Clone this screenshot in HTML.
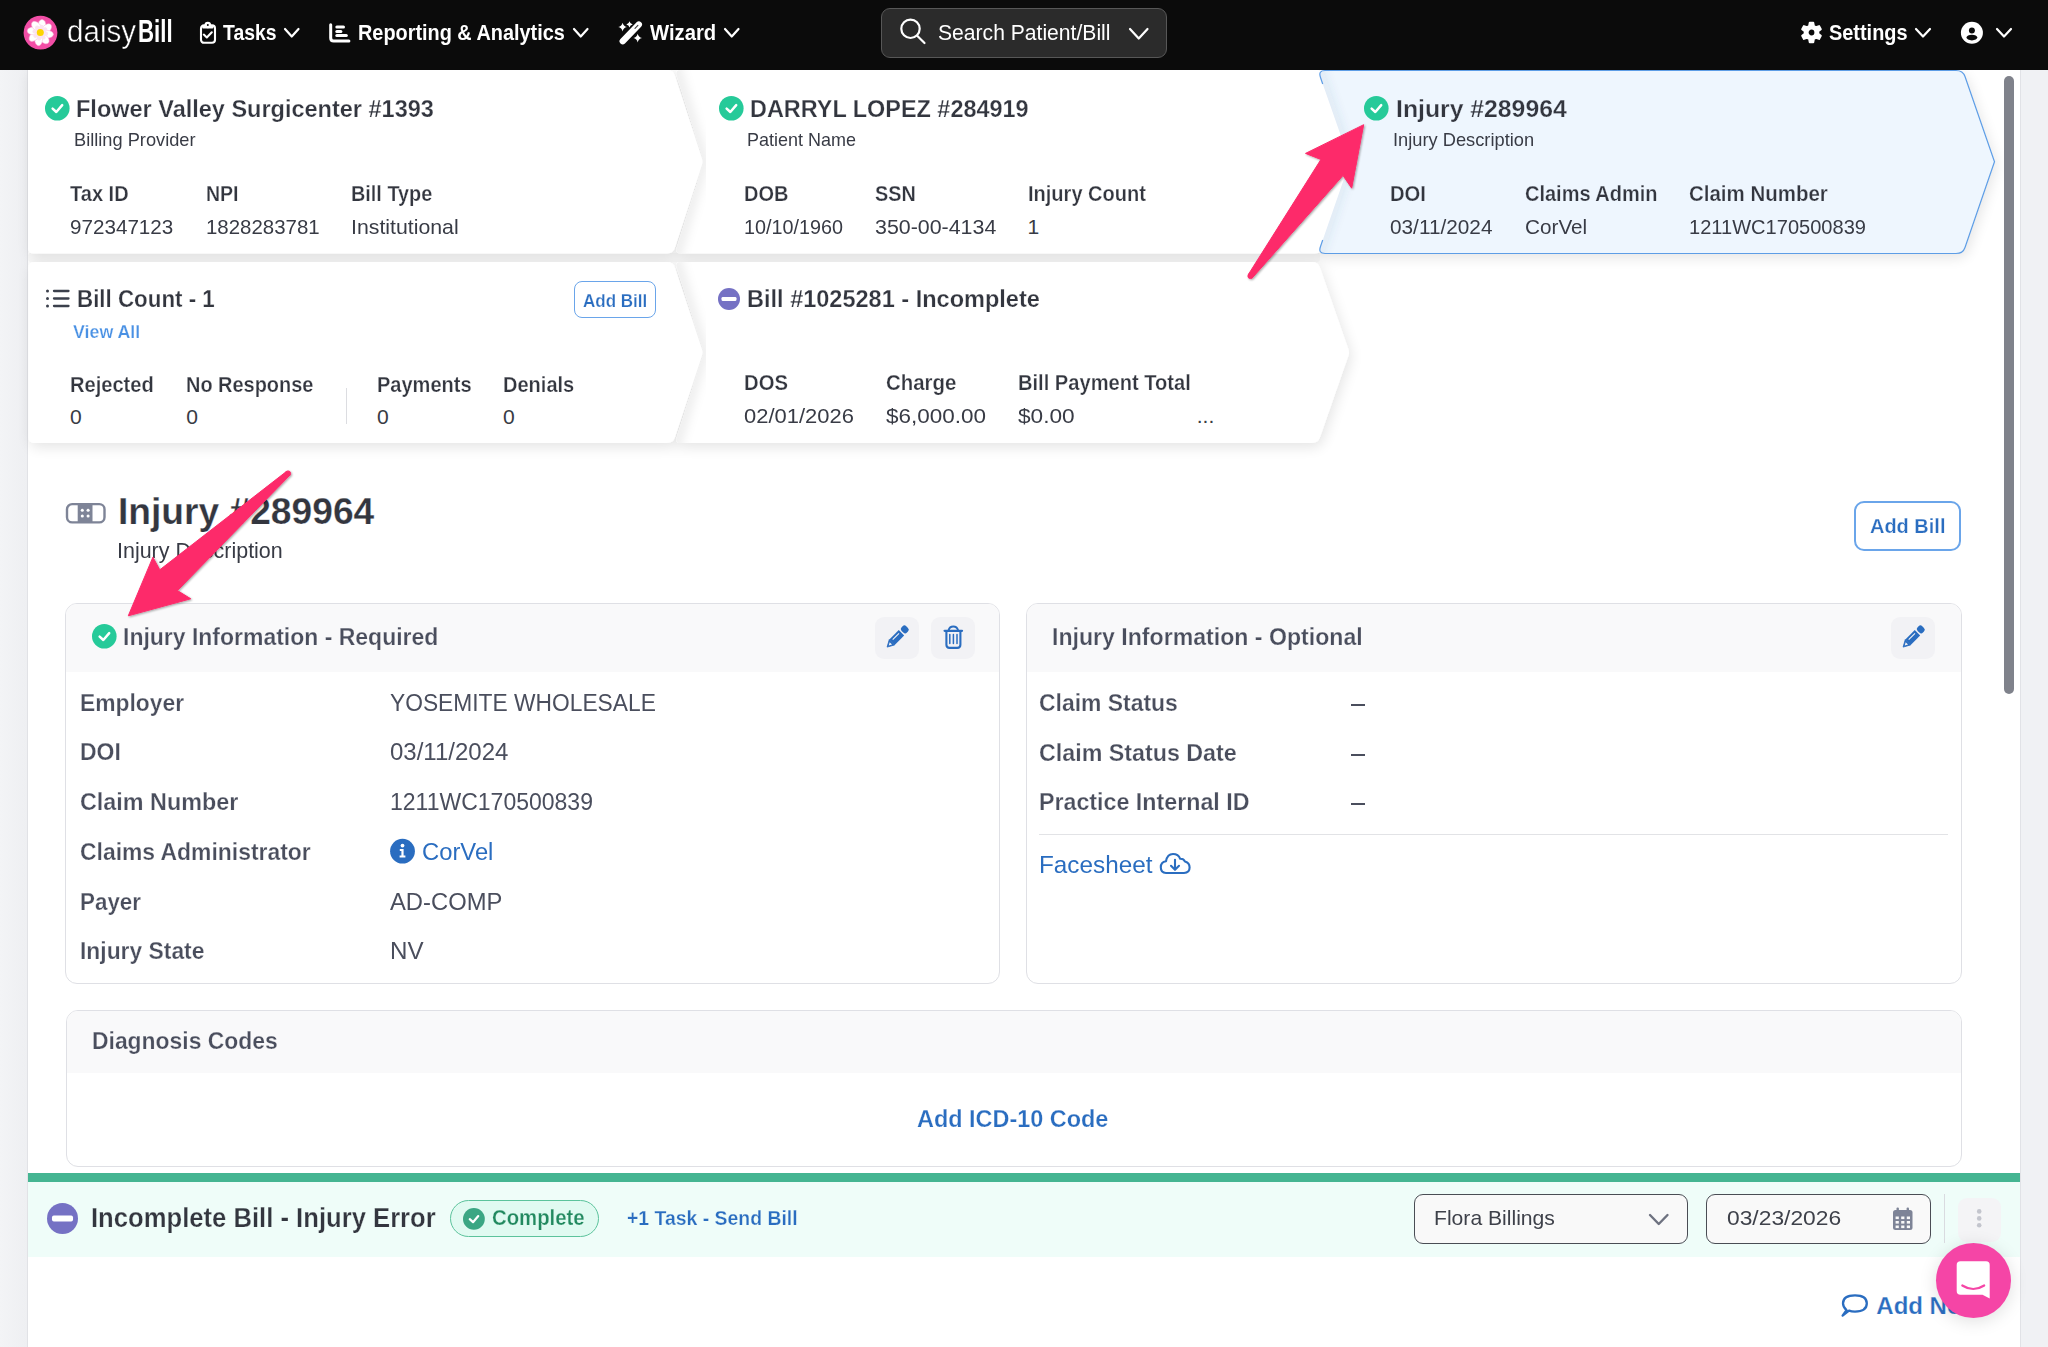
<!DOCTYPE html><html><head><meta charset="utf-8"><style>
html,body{margin:0;padding:0;width:2048px;height:1347px;overflow:hidden;background:#fff;font-family:"Liberation Sans",sans-serif;}
.t{position:absolute;white-space:nowrap;}
.a{position:absolute;}
svg{position:absolute;overflow:visible;}
</style></head><body>
<div class="a" style="left:0;top:0;width:27px;height:1347px;background:linear-gradient(90deg,#f3f4f6,#eeeff2);border-right:1px solid #e1e2e6"></div>
<div class="a" style="left:2020px;top:0;width:28px;height:1347px;background:#f0f1f4;border-left:1px solid #e1e2e6"></div>
<svg style="left:0;top:0" width="2048" height="500">
<defs>
<filter id="sh" x="-5%" y="-20%" width="110%" height="140%"><feGaussianBlur in="SourceAlpha" stdDeviation="7"/><feOffset dx="2" dy="4"/><feComponentTransfer><feFuncA type="linear" slope="0.11"/></feComponentTransfer><feMerge><feMergeNode/><feMergeNode in="SourceGraphic"/></feMerge></filter>
<filter id="bl"><feGaussianBlur stdDeviation="5"/></filter>
<clipPath id="cB"><path d="M676.81 75.72 Q675 70 681.00 70.00 L1315.00 70.00 Q1321 70 1322.86 75.70 L1350.07 158.90 Q1351 161.75 1350.07 164.60 L1322.86 247.80 Q1321 253.5 1315.00 253.50 L681.00 253.50 Q675 253.5 676.81 247.78 L703.10 164.61 Q704 161.75 703.10 158.89 Z"/></clipPath>
<clipPath id="cC"><path d="M1320.32 77.11 Q1318 70.5 1325.00 70.50 L1955.00 70.50 Q1963 70.5 1965.61 78.06 L1993.85 159.86 Q1994.5 161.75 1993.85 163.64 L1965.60 245.93 Q1963 253.5 1955.00 253.50 L1325.00 253.50 Q1318 253.5 1320.31 246.89 L1349.01 164.58 Q1350 161.75 1349.01 158.92 Z"/></clipPath>
<clipPath id="cE"><path d="M676.83 267.71 Q675 262 681.00 262.00 L1312.00 262.00 Q1318 262 1319.97 267.67 L1348.51 349.67 Q1349.5 352.5 1348.51 355.33 L1319.97 437.33 Q1318 443 1312.00 443.00 L681.00 443.00 Q675 443 676.83 437.29 L703.08 355.36 Q704 352.5 703.08 349.64 Z"/></clipPath>
</defs>
<rect x="28" y="253" width="1292" height="9" rx="3" fill="#f9f9f9"/>
<g filter="url(#sh)">
<path d="M28.00 70.00 Q28 70 28.00 70.00 L667.00 70.00 Q673 70 674.86 75.70 L702.07 158.90 Q703 161.75 702.07 164.60 L674.86 247.80 Q673 253.5 667.00 253.50 L34.00 253.50 Q28 253.5 28.00 247.50 Z" fill="#fff"/>
<path d="M676.81 75.72 Q675 70 681.00 70.00 L1315.00 70.00 Q1321 70 1322.86 75.70 L1350.07 158.90 Q1351 161.75 1350.07 164.60 L1322.86 247.80 Q1321 253.5 1315.00 253.50 L681.00 253.50 Q675 253.5 676.81 247.78 L703.10 164.61 Q704 161.75 703.10 158.89 Z" fill="#fff"/>
<path d="M28.50 268.00 Q28.5 262 34.50 262.00 L667.00 262.00 Q673 262 674.89 267.70 L702.06 349.65 Q703 352.5 702.06 355.35 L674.89 437.30 Q673 443 667.00 443.00 L34.50 443.00 Q28.5 443 28.50 437.00 Z" fill="#fff"/>
<path d="M676.83 267.71 Q675 262 681.00 262.00 L1312.00 262.00 Q1318 262 1319.97 267.67 L1348.51 349.67 Q1349.5 352.5 1348.51 355.33 L1319.97 437.33 Q1318 443 1312.00 443.00 L681.00 443.00 Q675 443 676.83 437.29 L703.08 355.36 Q704 352.5 703.08 349.64 Z" fill="#fff"/>
<path d="M1320.32 77.11 Q1318 70.5 1325.00 70.50 L1955.00 70.50 Q1963 70.5 1965.61 78.06 L1993.85 159.86 Q1994.5 161.75 1993.85 163.64 L1965.60 245.93 Q1963 253.5 1955.00 253.50 L1325.00 253.50 Q1318 253.5 1320.31 246.89 L1349.01 164.58 Q1350 161.75 1349.01 158.92 Z" fill="#eef6fe"/>
</g>
<g clip-path="url(#cB)"><path d="M673 60 L703 161.75 L673 263.5" stroke="#000" stroke-opacity="0.065" stroke-width="12" fill="none" filter="url(#bl)"/></g>
<g clip-path="url(#cE)"><path d="M673 252 L703 352.5 L673 453" stroke="#000" stroke-opacity="0.065" stroke-width="12" fill="none" filter="url(#bl)"/></g>
<g clip-path="url(#cC)"><path d="M1316 60 L1350 161.75 L1316 263.5" stroke="#3a5a80" stroke-opacity="0.10" stroke-width="8" fill="none" filter="url(#bl)"/></g>
<path d="M1322.7 84 L1320.5 77.5 Q1318 70.5 1325 70.5 L1956 70.5 Q1963 70.5 1965 76.5 L1994.5 161.75 L1965 247.5 Q1963 253.5 1956 253.5 L1325 253.5 Q1318 253.5 1320.5 246.5 L1322.7 240.0" fill="none" stroke="#5d9de6" stroke-width="1.2"/>
</svg>
<svg style="left:44.0px;top:95.10000000000001px" width="26.6" height="26.6"><circle cx="13.3" cy="13.3" r="12.3" fill="#26ca99"/><path d="M8.63 13.55 L12.32 16.99 L18.22 10.10" stroke="#fff" stroke-width="2.46" fill="none" stroke-linecap="round" stroke-linejoin="round"/></svg>
<div class="t" style="left:76.00px;top:97px;font-size:24.4px;line-height:24.4px;font-weight:700;color:#33363f;transform:scaleX(0.9634);transform-origin:0 0;-webkit-text-stroke:0.25px #fff;">Flower Valley Surgicenter #1393</div>
<div class="t" style="left:73.70px;top:131px;font-size:18.4px;line-height:18.4px;font-weight:400;color:#383b45;transform:scaleX(0.9908);transform-origin:0 0;">Billing Provider</div>
<div class="t" style="left:70.40px;top:184px;font-size:21.4px;line-height:21.4px;font-weight:700;color:#33363f;transform:scaleX(0.9362);transform-origin:0 0;-webkit-text-stroke:0.25px #fff;">Tax ID</div>
<div class="t" style="left:205.70px;top:184px;font-size:21.4px;line-height:21.4px;font-weight:700;color:#33363f;transform:scaleX(0.9121);transform-origin:0 0;-webkit-text-stroke:0.25px #fff;">NPI</div>
<div class="t" style="left:350.70px;top:184px;font-size:21.4px;line-height:21.4px;font-weight:700;color:#33363f;transform:scaleX(0.9277);transform-origin:0 0;-webkit-text-stroke:0.25px #fff;">Bill Type</div>
<div class="t" style="left:70.40px;top:216px;font-size:21.1px;line-height:21.1px;font-weight:400;color:#383b45;transform:scaleX(0.9782);transform-origin:0 0;">972347123</div>
<div class="t" style="left:205.70px;top:216px;font-size:21.1px;line-height:21.1px;font-weight:400;color:#383b45;transform:scaleX(0.9683);transform-origin:0 0;">1828283781</div>
<div class="t" style="left:350.70px;top:216px;font-size:21.1px;line-height:21.1px;font-weight:400;color:#383b45;transform:scaleX(1.0087);transform-origin:0 0;">Institutional</div>
<svg style="left:717.5px;top:95.10000000000001px" width="26.6" height="26.6"><circle cx="13.3" cy="13.3" r="12.3" fill="#26ca99"/><path d="M8.63 13.55 L12.32 16.99 L18.22 10.10" stroke="#fff" stroke-width="2.46" fill="none" stroke-linecap="round" stroke-linejoin="round"/></svg>
<div class="t" style="left:750.00px;top:97px;font-size:24.4px;line-height:24.4px;font-weight:700;color:#33363f;transform:scaleX(0.9602);transform-origin:0 0;-webkit-text-stroke:0.25px #fff;">DARRYL LOPEZ #284919</div>
<div class="t" style="left:747.00px;top:131px;font-size:18.4px;line-height:18.4px;font-weight:400;color:#383b45;transform:scaleX(0.9775);transform-origin:0 0;">Patient Name</div>
<div class="t" style="left:744.00px;top:184px;font-size:21.4px;line-height:21.4px;font-weight:700;color:#33363f;transform:scaleX(0.9346);transform-origin:0 0;-webkit-text-stroke:0.25px #fff;">DOB</div>
<div class="t" style="left:874.90px;top:184px;font-size:21.4px;line-height:21.4px;font-weight:700;color:#33363f;transform:scaleX(0.9255);transform-origin:0 0;-webkit-text-stroke:0.25px #fff;">SSN</div>
<div class="t" style="left:1027.60px;top:184px;font-size:21.4px;line-height:21.4px;font-weight:700;color:#33363f;transform:scaleX(0.9362);transform-origin:0 0;-webkit-text-stroke:0.25px #fff;">Injury Count</div>
<div class="t" style="left:744.00px;top:216px;font-size:21.1px;line-height:21.1px;font-weight:400;color:#383b45;transform:scaleX(0.9375);transform-origin:0 0;">10/10/1960</div>
<div class="t" style="left:874.90px;top:216px;font-size:21.1px;line-height:21.1px;font-weight:400;color:#383b45;transform:scaleX(1.0139);transform-origin:0 0;">350-00-4134</div>
<div class="t" style="left:1027.60px;top:216px;font-size:21.1px;line-height:21.1px;font-weight:400;color:#383b45;">1</div>
<svg style="left:1363.4px;top:95.10000000000001px" width="26.6" height="26.6"><circle cx="13.3" cy="13.3" r="12.3" fill="#26ca99"/><path d="M8.63 13.55 L12.32 16.99 L18.22 10.10" stroke="#fff" stroke-width="2.46" fill="none" stroke-linecap="round" stroke-linejoin="round"/></svg>
<div class="t" style="left:1395.80px;top:97px;font-size:24.4px;line-height:24.4px;font-weight:700;color:#33363f;transform:scaleX(1.0152);transform-origin:0 0;-webkit-text-stroke:0.25px #eef6fe;">Injury #289964</div>
<div class="t" style="left:1392.70px;top:131px;font-size:18.4px;line-height:18.4px;font-weight:400;color:#383b45;transform:scaleX(0.9934);transform-origin:0 0;">Injury Description</div>
<div class="t" style="left:1390.00px;top:184px;font-size:21.4px;line-height:21.4px;font-weight:700;color:#33363f;transform:scaleX(0.9451);transform-origin:0 0;-webkit-text-stroke:0.25px #eef6fe;">DOI</div>
<div class="t" style="left:1524.80px;top:184px;font-size:21.4px;line-height:21.4px;font-weight:700;color:#33363f;transform:scaleX(0.9346);transform-origin:0 0;-webkit-text-stroke:0.25px #eef6fe;">Claims Admin</div>
<div class="t" style="left:1689.00px;top:184px;font-size:21.4px;line-height:21.4px;font-weight:700;color:#33363f;transform:scaleX(0.9566);transform-origin:0 0;-webkit-text-stroke:0.25px #eef6fe;">Claim Number</div>
<div class="t" style="left:1390.00px;top:216px;font-size:21.1px;line-height:21.1px;font-weight:400;color:#383b45;transform:scaleX(0.9854);transform-origin:0 0;">03/11/2024</div>
<div class="t" style="left:1524.80px;top:216px;font-size:21.1px;line-height:21.1px;font-weight:400;color:#383b45;transform:scaleX(0.9826);transform-origin:0 0;">CorVel</div>
<div class="t" style="left:1689.00px;top:216px;font-size:21.1px;line-height:21.1px;font-weight:400;color:#383b45;transform:scaleX(0.9511);transform-origin:0 0;">1211WC170500839</div>
<svg style="left:44px;top:287px" width="30" height="24" fill="none" stroke="#3b404c" stroke-width="2.3" stroke-linecap="round">
<path d="M10 4 H24.5"/><path d="M10 11.5 H24.5"/><path d="M10 19 H24.5"/>
</svg>
<svg style="left:44px;top:287px" width="30" height="24" fill="#3b404c"><circle cx="3.5" cy="4" r="1.5"/><circle cx="3.5" cy="11.5" r="1.5"/><circle cx="3.5" cy="19" r="1.5"/></svg>
<div class="t" style="left:76.50px;top:287px;font-size:24.7px;line-height:24.7px;font-weight:700;color:#33363f;transform:scaleX(0.9049);transform-origin:0 0;-webkit-text-stroke:0.25px #fff;">Bill Count - 1</div>
<div class="a" style="left:574.3px;top:281px;width:79.3px;height:34.6px;border:1.6px solid #6aa5ea;border-radius:8px;background:#fff"></div>
<div class="t" style="left:583.40px;top:292px;font-size:18.2px;line-height:18.2px;font-weight:700;color:#2a6dc0;transform:scaleX(0.9344);transform-origin:0 0;-webkit-text-stroke:0.25px #fff;">Add Bill</div>
<div class="t" style="left:72.80px;top:323px;font-size:18.9px;line-height:18.9px;font-weight:700;color:#4a91e4;transform:scaleX(0.9420);transform-origin:0 0;-webkit-text-stroke:0.25px #fff;">View All</div>
<div class="t" style="left:70.00px;top:375px;font-size:21.4px;line-height:21.4px;font-weight:700;color:#33363f;transform:scaleX(0.9391);transform-origin:0 0;-webkit-text-stroke:0.25px #fff;">Rejected</div>
<div class="t" style="left:186.30px;top:375px;font-size:21.4px;line-height:21.4px;font-weight:700;color:#33363f;transform:scaleX(0.9317);transform-origin:0 0;-webkit-text-stroke:0.25px #fff;">No Response</div>
<div class="a" style="left:345.5px;top:388px;width:1px;height:36px;background:#dcdde1"></div>
<div class="t" style="left:377.00px;top:375px;font-size:21.4px;line-height:21.4px;font-weight:700;color:#33363f;transform:scaleX(0.9356);transform-origin:0 0;-webkit-text-stroke:0.25px #fff;">Payments</div>
<div class="t" style="left:503.00px;top:375px;font-size:21.4px;line-height:21.4px;font-weight:700;color:#33363f;transform:scaleX(0.9359);transform-origin:0 0;-webkit-text-stroke:0.25px #fff;">Denials</div>
<div class="t" style="left:70.00px;top:406px;font-size:21.1px;line-height:21.1px;font-weight:400;color:#383b45;">0</div>
<div class="t" style="left:186.30px;top:406px;font-size:21.1px;line-height:21.1px;font-weight:400;color:#383b45;">0</div>
<div class="t" style="left:377.00px;top:406px;font-size:21.1px;line-height:21.1px;font-weight:400;color:#383b45;">0</div>
<div class="t" style="left:503.00px;top:406px;font-size:21.1px;line-height:21.1px;font-weight:400;color:#383b45;">0</div>
<svg style="left:717.2px;top:286.7px" width="24" height="24"><circle cx="12" cy="12" r="11" fill="#7571c4"/><rect x="4.52" y="9.91" width="14.96" height="4.18" rx="1.32" fill="#fff"/></svg>
<div class="t" style="left:747.00px;top:287px;font-size:24.7px;line-height:24.7px;font-weight:700;color:#33363f;transform:scaleX(0.9528);transform-origin:0 0;-webkit-text-stroke:0.25px #fff;">Bill #1025281 - Incomplete</div>
<div class="t" style="left:744.10px;top:373px;font-size:21.4px;line-height:21.4px;font-weight:700;color:#33363f;transform:scaleX(0.9475);transform-origin:0 0;-webkit-text-stroke:0.25px #fff;">DOS</div>
<div class="t" style="left:886.20px;top:373px;font-size:21.4px;line-height:21.4px;font-weight:700;color:#33363f;transform:scaleX(0.9536);transform-origin:0 0;-webkit-text-stroke:0.25px #fff;">Charge</div>
<div class="t" style="left:1018.00px;top:373px;font-size:21.4px;line-height:21.4px;font-weight:700;color:#33363f;transform:scaleX(0.9400);transform-origin:0 0;-webkit-text-stroke:0.25px #fff;">Bill Payment Total</div>
<div class="t" style="left:744.10px;top:405px;font-size:21.1px;line-height:21.1px;font-weight:400;color:#383b45;transform:scaleX(1.0407);transform-origin:0 0;">02/01/2026</div>
<div class="t" style="left:886.20px;top:405px;font-size:21.1px;line-height:21.1px;font-weight:400;color:#383b45;transform:scaleX(1.0650);transform-origin:0 0;">$6,000.00</div>
<div class="t" style="left:1018.00px;top:405px;font-size:21.1px;line-height:21.1px;font-weight:400;color:#383b45;transform:scaleX(1.0746);transform-origin:0 0;">$0.00</div>
<div class="t" style="left:1196.70px;top:405px;font-size:21.1px;line-height:21.1px;font-weight:400;color:#383b45;">...</div>
<div class="a" style="left:0;top:0;width:2048px;height:70px;background:#0b0b0b"></div>
<svg style="left:0;top:0" width="240" height="70">
<defs><radialGradient id="pet" cx="40.3" cy="32.6" r="13" gradientUnits="userSpaceOnUse"><stop offset="0.25" stop-color="#f9cfe4"/><stop offset="0.6" stop-color="#fff"/></radialGradient></defs>
<circle cx="40.5" cy="32.7" r="16.9" fill="#f24ea6"/>
<g transform="translate(40.3 32.6)" fill="url(#pet)">
<ellipse cx="1.7" cy="-6.8" rx="3.9" ry="6.3" transform="rotate(0)" fill="#fff" stroke="#f7b3d6" stroke-width="0.5"/><ellipse cx="1.7" cy="-6.8" rx="3.9" ry="6.3" transform="rotate(45)" fill="#fff" stroke="#f7b3d6" stroke-width="0.5"/><ellipse cx="1.7" cy="-6.8" rx="3.9" ry="6.3" transform="rotate(90)" fill="#fff" stroke="#f7b3d6" stroke-width="0.5"/><ellipse cx="1.7" cy="-6.8" rx="3.9" ry="6.3" transform="rotate(135)" fill="#fff" stroke="#f7b3d6" stroke-width="0.5"/><ellipse cx="1.7" cy="-6.8" rx="3.9" ry="6.3" transform="rotate(180)" fill="#fff" stroke="#f7b3d6" stroke-width="0.5"/><ellipse cx="1.7" cy="-6.8" rx="3.9" ry="6.3" transform="rotate(225)" fill="#fff" stroke="#f7b3d6" stroke-width="0.5"/><ellipse cx="1.7" cy="-6.8" rx="3.9" ry="6.3" transform="rotate(270)" fill="#fff" stroke="#f7b3d6" stroke-width="0.5"/><ellipse cx="1.7" cy="-6.8" rx="3.9" ry="6.3" transform="rotate(315)" fill="#fff" stroke="#f7b3d6" stroke-width="0.5"/>
<ellipse cx="1.2" cy="-4.6" rx="2.2" ry="3.2" transform="rotate(0)" fill="#fbe3f0"/><ellipse cx="1.2" cy="-4.6" rx="2.2" ry="3.2" transform="rotate(45)" fill="#fbe3f0"/><ellipse cx="1.2" cy="-4.6" rx="2.2" ry="3.2" transform="rotate(90)" fill="#fbe3f0"/><ellipse cx="1.2" cy="-4.6" rx="2.2" ry="3.2" transform="rotate(135)" fill="#fbe3f0"/><ellipse cx="1.2" cy="-4.6" rx="2.2" ry="3.2" transform="rotate(180)" fill="#fbe3f0"/><ellipse cx="1.2" cy="-4.6" rx="2.2" ry="3.2" transform="rotate(225)" fill="#fbe3f0"/><ellipse cx="1.2" cy="-4.6" rx="2.2" ry="3.2" transform="rotate(270)" fill="#fbe3f0"/><ellipse cx="1.2" cy="-4.6" rx="2.2" ry="3.2" transform="rotate(315)" fill="#fbe3f0"/>
<circle r="3.5" fill="#fdd500"/></g>
</svg>
<div class="t" style="left:67.00px;top:16px;font-size:31.0px;line-height:31.0px;font-weight:400;color:#fff;transform:scaleX(0.9560);transform-origin:0 0;-webkit-text-stroke:0.5px #0b0b0b;">daisy</div>
<div class="t" style="left:138.20px;top:16px;font-size:31.4px;line-height:31.4px;font-weight:700;color:#fff;transform:scaleX(0.7086);transform-origin:0 0;">Bill</div>
<svg style="left:196px;top:20px" width="24" height="28">
<rect x="5" y="5.4" width="14" height="17.4" rx="3" fill="none" stroke="#fff" stroke-width="2.1"/>
<circle cx="11.8" cy="5" r="3.3" fill="#fff"/><rect x="6.2" y="5.5" width="11.2" height="3" rx="1" fill="#fff"/>
<circle cx="11.8" cy="5.1" r="1" fill="#0b0b0b"/>
<path d="M7.8 14.6 L10.8 17.4 L15.8 12.3" fill="none" stroke="#fff" stroke-width="2.1" stroke-linecap="round" stroke-linejoin="round"/>
</svg>
<div class="t" style="left:223.00px;top:22px;font-size:22.2px;line-height:22.2px;font-weight:700;color:#fff;transform:scaleX(0.8732);transform-origin:0 0;">Tasks</div>
<svg style="left:282px;top:26px" width="19.5" height="13.5"><path d="M3 3 L9.75 10.5 L16.5 3" fill="none" stroke="#fff" stroke-width="2.2" stroke-linecap="round" stroke-linejoin="round"/></svg>
<svg style="left:326px;top:20px" width="28" height="26" fill="none" stroke="#fff" stroke-width="3" stroke-linecap="round" stroke-linejoin="round">
<path d="M4.7 4.8 V18 Q4.7 21 7.7 21 H22.9"/>
<path d="M10.8 7.1 H17.5"/><path d="M10.8 11.4 H14.9"/><path d="M10.8 15.4 H20.3"/>
</svg>
<div class="t" style="left:357.90px;top:22px;font-size:22.2px;line-height:22.2px;font-weight:700;color:#fff;transform:scaleX(0.8957);transform-origin:0 0;">Reporting &amp; Analytics</div>
<svg style="left:571px;top:26px" width="19.5" height="13.5"><path d="M3 3 L9.75 10.5 L16.5 3" fill="none" stroke="#fff" stroke-width="2.2" stroke-linecap="round" stroke-linejoin="round"/></svg>
<svg style="left:616px;top:19px" width="30" height="28">
<path d="M6.7 22.25 L22.85 5.5" stroke="#fff" stroke-width="6.3" stroke-linecap="round"/>
<path d="M19 9.4 L21.9 6.4" stroke="#0b0b0b" stroke-width="1.1" stroke-linecap="round" stroke-opacity="0.8"/>
<path d="M6.6 3.8 Q7.374 7.326 10.899999999999999 8.1 Q7.374 8.873999999999999 6.6 12.399999999999999 Q5.826 8.873999999999999 2.3 8.1 Q5.826 7.326 6.6 3.8Z" fill="#fff"/>
<path d="M13.5 2.2 Q14.076 4.824000000000001 16.7 5.4 Q14.076 5.976 13.5 8.600000000000001 Q12.924 5.976 10.3 5.4 Q12.924 4.824000000000001 13.5 2.2Z" fill="#fff"/>
<path d="M21.7 14.8 Q22.474 18.326 26.0 19.1 Q22.474 19.874000000000002 21.7 23.400000000000002 Q20.926 19.874000000000002 17.4 19.1 Q20.926 18.326 21.7 14.8Z" fill="#fff"/>
</svg>
<div class="t" style="left:649.60px;top:22px;font-size:22.2px;line-height:22.2px;font-weight:700;color:#fff;transform:scaleX(0.9119);transform-origin:0 0;">Wizard</div>
<svg style="left:721.5px;top:26px" width="19.5" height="13.5"><path d="M3 3 L9.75 10.5 L16.5 3" fill="none" stroke="#fff" stroke-width="2.2" stroke-linecap="round" stroke-linejoin="round"/></svg>
<div class="a" style="left:881px;top:8px;width:284px;height:48px;border:1px solid #575757;border-radius:9px;background:#2b2b2b"></div>
<svg style="left:897px;top:16px" width="32" height="32" fill="none" stroke="#fff" stroke-width="2.2" stroke-linecap="round">
<circle cx="13.5" cy="12.8" r="9.2"/><path d="M20.2 19.8 L27.5 27"/>
</svg>
<div class="t" style="left:937.90px;top:22px;font-size:21.9px;line-height:21.9px;font-weight:400;color:#fff;transform:scaleX(0.9641);transform-origin:0 0;">Search Patient/Bill</div>
<svg style="left:1126.5px;top:25.5px" width="23.5" height="15.5"><path d="M3 3 L11.75 12.5 L20.5 3" fill="none" stroke="#fff" stroke-width="2.2" stroke-linecap="round" stroke-linejoin="round"/></svg>
<svg style="left:1798px;top:19px" width="28" height="28"><path fill="#fff" fill-rule="evenodd" stroke="#fff" stroke-width="2" stroke-linejoin="round" d="M15.84 19.99 L15.25 23.24 L11.75 23.24 L11.16 19.99 L9.05 18.77 L5.94 19.89 L4.19 16.85 L6.71 14.72 L6.71 12.28 L4.19 10.15 L5.94 7.11 L9.05 8.23 L11.16 7.01 L11.75 3.76 L15.25 3.76 L15.84 7.01 L17.95 8.23 L21.06 7.11 L22.81 10.15 L20.29 12.28 L20.29 14.72 L22.81 16.85 L21.06 19.89 L17.95 18.77Z M17.4 13.5 A3.9 3.9 0 1 0 9.6 13.5 A3.9 3.9 0 1 0 17.4 13.5Z"/></svg>
<div class="t" style="left:1829.30px;top:22px;font-size:22.2px;line-height:22.2px;font-weight:700;color:#fff;transform:scaleX(0.8975);transform-origin:0 0;">Settings</div>
<svg style="left:1912.5px;top:25.8px" width="20" height="13.5"><path d="M3 3 L10.0 10.5 L17 3" fill="none" stroke="#fff" stroke-width="2.2" stroke-linecap="round" stroke-linejoin="round"/></svg>
<svg style="left:1958px;top:20px" width="28" height="26">
<circle cx="13.9" cy="12.75" r="11" fill="#fff"/>
<circle cx="13.9" cy="10.6" r="3" fill="#0b0b0b"/>
<ellipse cx="13.9" cy="17.6" rx="5.4" ry="2.8" fill="#0b0b0b"/>
</svg>
<svg style="left:1993.5px;top:25.8px" width="20" height="13.5"><path d="M3 3 L10.0 10.5 L17 3" fill="none" stroke="#fff" stroke-width="2.2" stroke-linecap="round" stroke-linejoin="round"/></svg>
<svg style="left:64px;top:501px" width="44" height="24">
<rect x="3" y="3.1" width="37.5" height="18.3" rx="5.2" fill="none" stroke="#7e8497" stroke-width="2.4"/>
<rect x="13.7" y="2.5" width="14.8" height="19.5" fill="#7e8497"/>
<g fill="#fff"><circle cx="18.3" cy="9.3" r="1.55"/><circle cx="24.1" cy="9.3" r="1.55"/><circle cx="18.3" cy="15" r="1.55"/><circle cx="24.1" cy="15" r="1.55"/></g>
</svg>
<div class="t" style="left:117.90px;top:493px;font-size:37.2px;line-height:37.2px;font-weight:700;color:#33363f;-webkit-text-stroke:0.25px #fff;">Injury #289964</div>
<div class="t" style="left:117.20px;top:540px;font-size:21.9px;line-height:21.9px;font-weight:400;color:#383b45;transform:scaleX(0.9800);transform-origin:0 0;">Injury Description</div>
<div class="a" style="left:1854px;top:501px;width:103px;height:46px;border:2px solid #6aa5ea;border-radius:10px;background:#fff"></div>
<div class="t" style="left:1869.60px;top:516px;font-size:20.6px;line-height:20.6px;font-weight:700;color:#2a6dc0;transform:scaleX(0.9696);transform-origin:0 0;-webkit-text-stroke:0.25px #fff;">Add Bill</div>
<div class="a" style="left:65px;top:603px;width:933px;height:379px;border:1px solid #dfe0e5;border-radius:12px;background:#fff;overflow:hidden"><div class="a" style="left:0;top:0;width:100%;height:67.5px;background:#f9f9fa"></div></div>
<svg style="left:90.7px;top:623.2px" width="26.6" height="26.6"><circle cx="13.3" cy="13.3" r="12.3" fill="#26ca99"/><path d="M8.63 13.55 L12.32 16.99 L18.22 10.10" stroke="#fff" stroke-width="2.46" fill="none" stroke-linecap="round" stroke-linejoin="round"/></svg>
<div class="t" style="left:123.00px;top:625px;font-size:24.4px;line-height:24.4px;font-weight:700;color:#4a4e5d;transform:scaleX(0.9421);transform-origin:0 0;-webkit-text-stroke:0.25px #f9f9fa;">Injury Information - Required</div>
<div class="a" style="left:875px;top:616.5px;width:44px;height:42.5px;border-radius:9px;background:#f2f2f5"></div>
<svg style="left:0;top:0;width:2048px;height:1px;overflow:visible"><g transform="translate(886.9 647.3) rotate(-45)">
<path d="M0.3 0 L7.2 -3.8 L7.2 3.8 Z" fill="#2a6dc0" stroke="#2a6dc0" stroke-width="0.8" stroke-linejoin="round"/>
<path d="M2.6 0 L5.6 -1.7 L5.6 1.7 Z" fill="#f2f2f5"/>
<rect x="7.2" y="-3.8" width="13.4" height="7.6" fill="#2a6dc0"/>
<path d="M9.5 -1.3 H18.4" stroke="#f2f2f5" stroke-width="1.1"/>
<rect x="22" y="-3.8" width="6.6" height="7.6" rx="2.6" fill="#2a6dc0"/>
</g></svg>
<div class="a" style="left:931.3px;top:616.5px;width:44.0px;height:42.5px;border-radius:9px;background:#f2f2f5"></div>
<svg style="left:0;top:0;width:2048px;height:1px;overflow:visible" fill="none" stroke="#2a6dc0" stroke-linecap="round" stroke-linejoin="round">
<path d="M944.6 630.8 H962" stroke-width="2.3"/>
<path d="M948.6 630.2 Q949.6 626.6 953.3 626.6 Q957 626.6 958 630.2" stroke-width="2"/>
<path d="M946.4 632 V644.8 Q946.4 647.9 949.5 647.9 H957.3 Q960.4 647.9 960.4 644.8 V632" stroke-width="2.1"/>
<path d="M949.8 634.6 V643.4 M953.4 634.6 V643.4 M957 634.6 V643.4" stroke-width="1.5"/>
</svg>
<div class="t" style="left:79.50px;top:691px;font-size:24.3px;line-height:24.3px;font-weight:700;color:#4a4e5d;transform:scaleX(0.9396);transform-origin:0 0;-webkit-text-stroke:0.25px #fff;">Employer</div>
<div class="t" style="left:390.20px;top:691px;font-size:24.7px;line-height:24.7px;font-weight:400;color:#4a4e5d;transform:scaleX(0.9228);transform-origin:0 0;">YOSEMITE WHOLESALE</div>
<div class="t" style="left:79.50px;top:740px;font-size:24.3px;line-height:24.3px;font-weight:700;color:#4a4e5d;transform:scaleX(0.9456);transform-origin:0 0;-webkit-text-stroke:0.25px #fff;">DOI</div>
<div class="t" style="left:390.20px;top:740px;font-size:24.7px;line-height:24.7px;font-weight:400;color:#4a4e5d;transform:scaleX(0.9723);transform-origin:0 0;">03/11/2024</div>
<div class="t" style="left:79.50px;top:790px;font-size:24.3px;line-height:24.3px;font-weight:700;color:#4a4e5d;transform:scaleX(0.9614);transform-origin:0 0;-webkit-text-stroke:0.25px #fff;">Claim Number</div>
<div class="t" style="left:390.20px;top:790px;font-size:24.7px;line-height:24.7px;font-weight:400;color:#4a4e5d;transform:scaleX(0.9318);transform-origin:0 0;">1211WC170500839</div>
<div class="t" style="left:79.50px;top:840px;font-size:24.3px;line-height:24.3px;font-weight:700;color:#4a4e5d;transform:scaleX(0.9423);transform-origin:0 0;-webkit-text-stroke:0.25px #fff;">Claims Administrator</div>
<div class="t" style="left:79.50px;top:890px;font-size:24.3px;line-height:24.3px;font-weight:700;color:#4a4e5d;transform:scaleX(0.9212);transform-origin:0 0;-webkit-text-stroke:0.25px #fff;">Payer</div>
<div class="t" style="left:390.20px;top:890px;font-size:24.7px;line-height:24.7px;font-weight:400;color:#4a4e5d;transform:scaleX(0.9633);transform-origin:0 0;">AD-COMP</div>
<div class="t" style="left:79.50px;top:939px;font-size:24.3px;line-height:24.3px;font-weight:700;color:#4a4e5d;transform:scaleX(0.9402);transform-origin:0 0;-webkit-text-stroke:0.25px #fff;">Injury State</div>
<div class="t" style="left:390.20px;top:939px;font-size:24.7px;line-height:24.7px;font-weight:400;color:#4a4e5d;transform:scaleX(0.9787);transform-origin:0 0;">NV</div>
<svg style="left:389px;top:838px" width="27" height="27"><circle cx="13.5" cy="13.2" r="12.4" fill="#2a6dc0"/>
<circle cx="13.5" cy="7.6" r="1.9" fill="#fff"/><path d="M10.8 11 H14.6 V17.5 H16.4 V19.5 H10.6 V17.5 H12.4 V13 H10.8Z" fill="#fff"/></svg>
<div class="t" style="left:422.30px;top:840px;font-size:24.7px;line-height:24.7px;font-weight:400;color:#2a6dc0;transform:scaleX(0.9636);transform-origin:0 0;">CorVel</div>
<div class="a" style="left:1026px;top:603px;width:933.5px;height:379px;border:1px solid #dfe0e5;border-radius:12px;background:#fff;overflow:hidden"><div class="a" style="left:0;top:0;width:100%;height:67.5px;background:#f9f9fa"></div></div>
<div class="t" style="left:1051.90px;top:625px;font-size:24.4px;line-height:24.4px;font-weight:700;color:#4a4e5d;transform:scaleX(0.9474);transform-origin:0 0;-webkit-text-stroke:0.25px #f9f9fa;">Injury Information - Optional</div>
<div class="a" style="left:1891px;top:616.5px;width:44px;height:42.5px;border-radius:9px;background:#f2f2f5"></div>
<svg style="left:0;top:0;width:2048px;height:1px;overflow:visible"><g transform="translate(1902.9 647.3) rotate(-45)">
<path d="M0.3 0 L7.2 -3.8 L7.2 3.8 Z" fill="#2a6dc0" stroke="#2a6dc0" stroke-width="0.8" stroke-linejoin="round"/>
<path d="M2.6 0 L5.6 -1.7 L5.6 1.7 Z" fill="#f2f2f5"/>
<rect x="7.2" y="-3.8" width="13.4" height="7.6" fill="#2a6dc0"/>
<path d="M9.5 -1.3 H18.4" stroke="#f2f2f5" stroke-width="1.1"/>
<rect x="22" y="-3.8" width="6.6" height="7.6" rx="2.6" fill="#2a6dc0"/>
</g></svg>
<div class="t" style="left:1039.20px;top:691px;font-size:24.3px;line-height:24.3px;font-weight:700;color:#4a4e5d;transform:scaleX(0.9433);transform-origin:0 0;-webkit-text-stroke:0.25px #fff;">Claim Status</div>
<div class="a" style="left:1350.5px;top:703.5px;width:14px;height:2px;background:#4a4e5d"></div>
<div class="t" style="left:1039.20px;top:741px;font-size:24.3px;line-height:24.3px;font-weight:700;color:#4a4e5d;transform:scaleX(0.9571);transform-origin:0 0;-webkit-text-stroke:0.25px #fff;">Claim Status Date</div>
<div class="a" style="left:1350.5px;top:753.5px;width:14px;height:2px;background:#4a4e5d"></div>
<div class="t" style="left:1039.20px;top:790px;font-size:24.3px;line-height:24.3px;font-weight:700;color:#4a4e5d;transform:scaleX(0.9561);transform-origin:0 0;-webkit-text-stroke:0.25px #fff;">Practice Internal ID</div>
<div class="a" style="left:1350.5px;top:802.8px;width:14px;height:2px;background:#4a4e5d"></div>
<div class="a" style="left:1039px;top:834px;width:909px;height:1px;background:#e2e3e6"></div>
<div class="t" style="left:1039.20px;top:853px;font-size:24.4px;line-height:24.4px;font-weight:400;color:#2a6dc0;transform:scaleX(0.9961);transform-origin:0 0;">Facesheet</div>
<svg style="left:0;top:0;width:2048px;height:1px;overflow:visible" fill="none" stroke="#2a6dc0" stroke-width="2.1" stroke-linecap="round" stroke-linejoin="round">
<path d="M1166 873 Q1160.8 873 1160.8 867.3 Q1160.8 862 1166 861.3 Q1167.3 854 1173 854 Q1178.3 854 1180.2 858.8 Q1183.6 858.6 1185 861.6 Q1189.6 863 1189.6 867.6 Q1189.6 873 1184 873 Z"/>
<path d="M1175 859.8 V869.6 M1171 865.8 L1175 869.8 L1179 865.8"/>
</svg>
<div class="a" style="left:65.5px;top:1010px;width:1894.0px;height:155px;border:1px solid #dfe0e5;border-radius:12px;background:#fff;overflow:hidden"><div class="a" style="left:0;top:0;width:100%;height:61.5px;background:#f9f9fa"></div></div>
<div class="t" style="left:92.40px;top:1029px;font-size:24.3px;line-height:24.3px;font-weight:700;color:#4a4e5d;transform:scaleX(0.9422);transform-origin:0 0;-webkit-text-stroke:0.25px #f9f9fa;">Diagnosis Codes</div>
<div class="t" style="left:917.40px;top:1107px;font-size:24.1px;line-height:24.1px;font-weight:700;color:#2a6dc0;transform:scaleX(0.9722);transform-origin:0 0;-webkit-text-stroke:0.25px #fff;">Add ICD-10 Code</div>
<div class="a" style="left:28px;top:1173px;width:1992px;height:9px;background:#45b592"></div>
<div class="a" style="left:28px;top:1182px;width:1992px;height:75px;background:#effdf9"></div>
<svg style="left:45.9px;top:1202.0px" width="33.0" height="33.0"><circle cx="16.5" cy="16.5" r="15.5" fill="#7571c4"/><rect x="5.96" y="13.55" width="21.08" height="5.89" rx="1.86" fill="#fff"/></svg>
<div class="t" style="left:91.30px;top:1205px;font-size:27.0px;line-height:27.0px;font-weight:700;color:#33363f;transform:scaleX(0.9495);transform-origin:0 0;-webkit-text-stroke:0.25px #effdf9;">Incomplete Bill - Injury Error</div>
<div class="a" style="left:449.5px;top:1200px;width:147.5px;height:35px;border:1.2px solid #5cc39c;border-radius:19px;background:#e0faf1"></div>
<svg style="left:461.70000000000005px;top:1206.5px" width="23.8" height="23.8"><circle cx="11.9" cy="11.9" r="10.9" fill="#3ba683"/><path d="M7.76 12.12 L11.03 15.17 L16.26 9.07" stroke="#fff" stroke-width="2.18" fill="none" stroke-linecap="round" stroke-linejoin="round"/></svg>
<div class="t" style="left:492.00px;top:1207px;font-size:21.2px;line-height:21.2px;font-weight:700;color:#22895f;transform:scaleX(0.9600);transform-origin:0 0;-webkit-text-stroke:0.25px #e0faf1;">Complete</div>
<div class="t" style="left:627.40px;top:1207px;font-size:21.1px;line-height:21.1px;font-weight:700;color:#2a6dc0;transform:scaleX(0.9204);transform-origin:0 0;-webkit-text-stroke:0.25px #effdf9;">+1 Task - Send Bill</div>
<div class="a" style="left:1414px;top:1194px;width:271.5px;height:47.5px;border:1.2px solid #4a4d55;border-radius:9px;background:#f9f9f9"></div>
<div class="t" style="left:1433.50px;top:1208px;font-size:20.9px;line-height:20.9px;font-weight:400;color:#3e414a;transform:scaleX(1.0113);transform-origin:0 0;">Flora Billings</div>
<svg style="left:1647px;top:1212px" width="23.5" height="15"><path d="M3 3 L11.75 12 L20.5 3" fill="none" stroke="#6e7280" stroke-width="2.4" stroke-linecap="round" stroke-linejoin="round"/></svg>
<div class="a" style="left:1706px;top:1194px;width:222.5px;height:47.5px;border:1.2px solid #4a4d55;border-radius:9px;background:#f9f9f9"></div>
<div class="t" style="left:1726.60px;top:1208px;font-size:20.9px;line-height:20.9px;font-weight:400;color:#3e414a;transform:scaleX(1.0917);transform-origin:0 0;">03/23/2026</div>
<svg style="left:1891px;top:1206px" width="24" height="25" fill="#7e8497">
<rect x="2" y="4" width="19.5" height="20" rx="2.5"/>
<rect x="5.5" y="1.5" width="2.4" height="5" rx="1"/><rect x="15.6" y="1.5" width="2.4" height="5" rx="1"/>
<g fill="#f9f9f9"><rect x="4.6" y="10.5" width="3.2" height="2.6"/><rect x="10.2" y="10.5" width="3.2" height="2.6"/><rect x="15.8" y="10.5" width="3.2" height="2.6"/>
<rect x="4.6" y="15" width="3.2" height="2.6"/><rect x="10.2" y="15" width="3.2" height="2.6"/><rect x="15.8" y="15" width="3.2" height="2.6"/>
<rect x="4.6" y="19.5" width="3.2" height="2.6"/><rect x="10.2" y="19.5" width="3.2" height="2.6"/><rect x="15.8" y="19.5" width="3.2" height="2.6"/></g>
</svg>
<div class="a" style="left:1943.5px;top:1194px;width:1px;height:49px;background:#d9dbe0"></div>
<div class="a" style="left:1957.5px;top:1197.5px;width:43px;height:44px;border-radius:9px;background:#f4f4f6"></div>
<svg style="left:1974px;top:1206px" width="10" height="24" fill="#c3c5cd"><circle cx="5.2" cy="5.4" r="2.3"/><circle cx="5.2" cy="12.4" r="2.3"/><circle cx="5.2" cy="19.2" r="2.3"/></svg>
<svg style="left:0;top:0;width:2048px;height:1px;overflow:visible" fill="none" stroke="#2a6dc0" stroke-width="2.3" stroke-linejoin="round" stroke-linecap="round">
<path d="M1846.5 1310.2 Q1843 1307.3 1843 1303.3 Q1843 1295.3 1855 1295.3 Q1866.8 1295.3 1866.8 1303.3 Q1866.8 1311.6 1855 1311.6 Q1851.5 1311.6 1849 1310.6 L1842.6 1315.6 Z"/>
</svg>
<div class="t" style="left:1876.30px;top:1294px;font-size:24.0px;line-height:24.0px;font-weight:700;color:#2a6dc0;-webkit-text-stroke:0.25px #fff;">Add Note</div>
<div class="a" style="left:1936px;top:1243px;width:75px;height:75px;border-radius:50%;background:#f545a6;box-shadow:0 3px 18px rgba(0,0,0,0.13)"></div>
<svg style="left:0;top:0;width:2048px;height:1px;overflow:visible">
<path d="M1960.5 1261.3 H1986 Q1989.7 1261.3 1989.7 1265 V1298.6 L1982.5 1294.8 H1960.5 Q1956.7 1294.8 1956.7 1291 V1265 Q1956.7 1261.3 1960.5 1261.3Z" fill="#fff"/>
<path d="M1962.3 1285.5 Q1973.2 1292.5 1984.2 1285.5" stroke="#f545a6" stroke-width="2.2" fill="none" stroke-linecap="round"/>
</svg>
<div class="a" style="left:2004px;top:75.5px;width:10px;height:618px;border-radius:5px;background:#7f828b"></div>
<svg style="left:0;top:0" width="2048" height="700">
<defs><filter id="ash" x="-20%" y="-20%" width="140%" height="140%"><feGaussianBlur in="SourceAlpha" stdDeviation="1.2"/><feOffset dx="0.8" dy="1"/><feComponentTransfer><feFuncA type="linear" slope="0.35"/></feComponentTransfer><feMerge><feMergeNode/><feMergeNode in="SourceGraphic"/></feMerge></filter></defs>
<g filter="url(#ash)" fill="#fd2b6b" stroke="#fd2b6b" stroke-width="1" stroke-linejoin="round">
<path d="M1252.6 277.6 L1343.0 175.5 L1351.7 188.2 L1363.7 124.7 L1305.5 153.4 L1320.9 159.5 L1248.4 274.4Z"/><circle cx="1250.5" cy="276" r="2.6"/>
<path d="M286.3 471.6 L159.8 569.8 L152.9 557.2 L128.3 615.8 L190.8 598.8 L177.5 590.6 L289.7 475.4Z"/><circle cx="288" cy="473.5" r="2.6"/>
</g></svg>
</body></html>
